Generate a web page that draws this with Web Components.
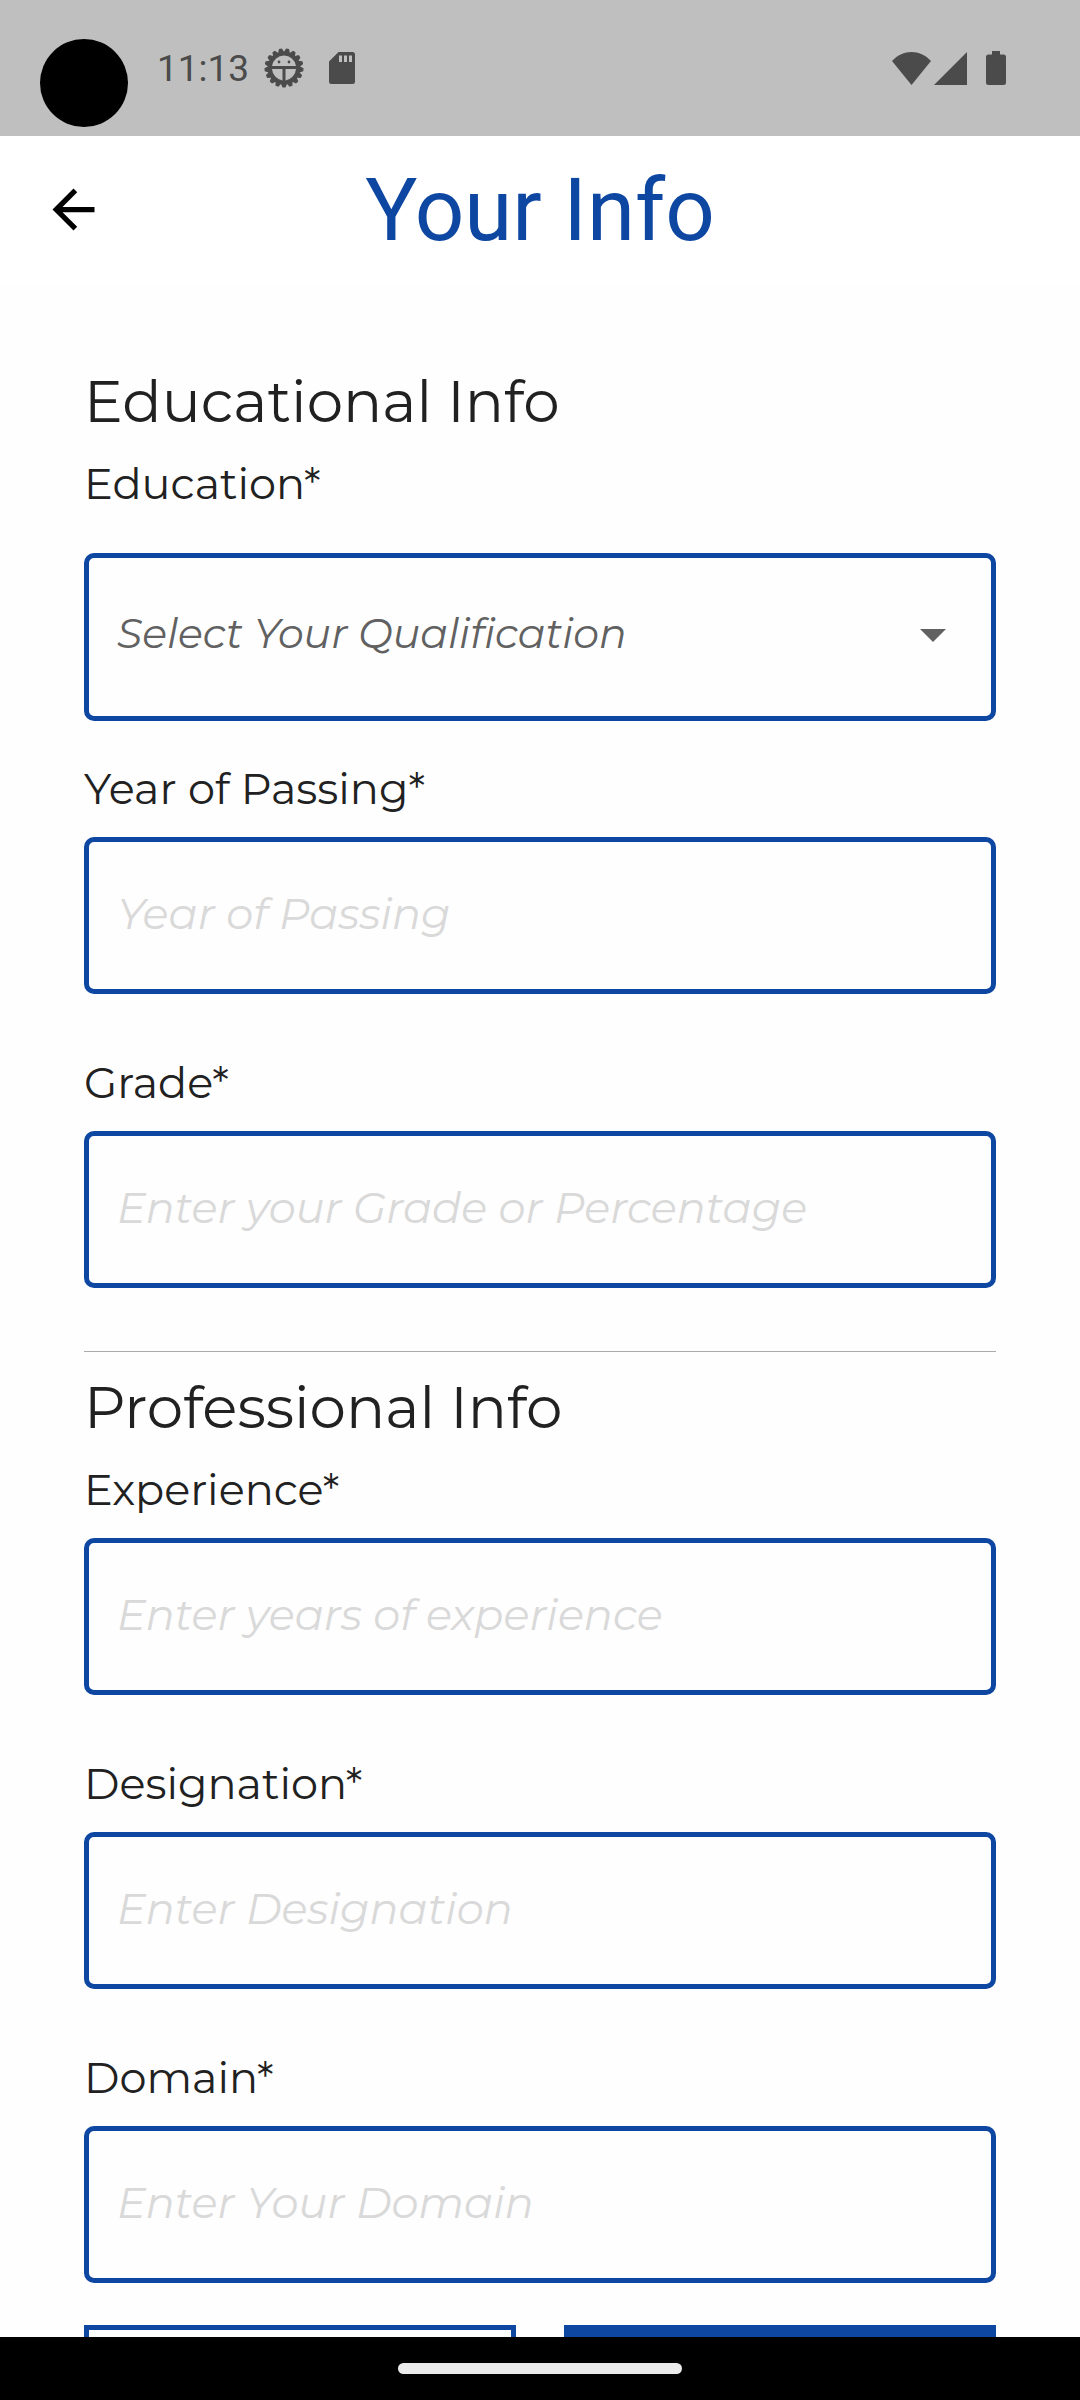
<!DOCTYPE html>
<html lang="en">
<head>
<meta charset="utf-8">
<meta name="viewport" content="width=device-width, initial-scale=1">
<title>Your Info</title>
<style>
  html, body { margin: 0; height: 100%; }
  body {
    --brand: #0d47a1;
    --ink: #212121;
    --muted: #616161;
    --hint: #d9d9d9;
    --surface: #fefefe;
    --gutter: 84px;
    font-family: Montserrat, Inter, "Open Sans", sans-serif;
    font-weight: 400;
    color: var(--ink);
    background: var(--surface);
  }
</style>
</head>
<body>
<phone-screen>
  <status-bar slot="top"></status-bar>
  <app-bar slot="top">Your Info</app-bar>
  <form-section heading="Educational Info">
    <select-field placeholder="Select Your Qualification">Education*</select-field>
    <text-field placeholder="Year of Passing">Year of Passing*</text-field>
    <text-field placeholder="Enter your Grade or Percentage">Grade*</text-field>
  </form-section>
  <form-section heading="Professional Info" divided>
    <text-field placeholder="Enter years of experience">Experience*</text-field>
    <text-field placeholder="Enter Designation">Designation*</text-field>
    <text-field placeholder="Enter Your Domain">Domain*</text-field>
  </form-section>
  <form-actions></form-actions>
  <nav-handle slot="bottom"></nav-handle>
</phone-screen>

<script>
  const define = (name, render) => customElements.define(name, class extends HTMLElement {
    constructor() {
      super();
      this.attachShadow({ mode: 'open' });
    }
    connectedCallback() {
      if (!this.shadowRoot.childNodes.length) {
        const t = document.createElement('template');
        t.innerHTML = render(this);
        this.shadowRoot.append(t.content.cloneNode(true));
      }
    }
  });

  define('phone-screen', () => `
    <style>
      :host { display: flex; flex-direction: column; height: 100vh; }
      header, footer { flex: none; }
      main {
        flex: 1; min-height: 0; overflow-y: auto; scrollbar-width: none;
        padding: 82px var(--gutter) 0; background: var(--surface);
      }
    </style>
    <header><slot name="top"></slot></header>
    <main><slot></slot></main>
    <footer><slot name="bottom"></slot></footer>`);

  /* Gear teeth for the debugging icon, one every 1/17 of a turn. */
  const teeth = Array.from({ length: 17 }, (_, i) =>
    `<path d="M16 6.5 18.500 0.500h3L24 6.5z" transform="rotate(${180 + i * 360 / 17} 20 20)"/>`).join('');

  define('status-bar', () => `
    <style>
      :host {
        display: flex; align-items: center; justify-content: space-between;
        height: 136px; padding: 0 74px 0 40px; box-sizing: border-box;
        background: #bfbfbf; color: #4b4b4b;
        font: 400 37px/44px Roboto, sans-serif;
      }
      .group { display: flex; align-items: center; }
      .camera { width: 88px; height: 88px; margin-top: 30px; border-radius: 50%; background: #000; }
      time { margin-left: 29px; margin-right: 15px; padding-top: 2px; }
      svg { display: block; fill: currentColor; }
      .sd { margin-left: 25px; }
      .signal { margin-left: 3px; }
      .battery { margin-left: 19px; }
    </style>
    <div class="group">
      <div class="camera"></div>
      <time>11:13</time>
      <svg width="40" height="40" viewBox="0 0 40 40" aria-hidden="true">
        ${teeth}
        <path fill-rule="evenodd" d="M20 4.500a15.500 15.500 0 1 0 0 31a15.500 15.500 0 1 0 0-31zM20 7.500a12.500 12.500 0 0 1 12 10.500H8A12.500 12.500 0 0 1 20 7.500zM8 21h10.500v11.500A12.500 12.500 0 0 1 8 21zM21.500 21H32a12.500 12.500 0 0 1-10.500 11.500z"/>
        <circle cx="15" cy="14" r="1.400"/><circle cx="25" cy="14" r="1.400"/>
      </svg>
      <svg class="sd" width="26" height="32" viewBox="0 0 26 32" aria-hidden="true">
        <path fill-rule="evenodd" d="M9.500 0H23.500A2.500 2.500 0 0 1 26 2.500V29.500A2.500 2.500 0 0 1 23.500 32H2.500A2.500 2.500 0 0 1 0 29.500V9.500zM10 3.500V10h3V3.500zM15 3.500V10h3V3.500zM20 3.500V10h3V3.500z"/>
      </svg>
    </div>
    <div class="group">
      <svg width="39" height="33" viewBox="0 0 39 33" aria-hidden="true"><path d="M19.500 33 0 9C11-3 28-3 39 9z"/></svg>
      <svg class="signal" width="33" height="33" viewBox="0 0 33 33" aria-hidden="true"><path d="M33 0V33H0z"/></svg>
      <svg class="battery" width="20" height="34" viewBox="0 0 20 34" aria-hidden="true"><path d="M6 0h8v3.500h3.500A2.500 2.500 0 0 1 20 6V31.500A2.500 2.500 0 0 1 17.500 34H2.500A2.500 2.500 0 0 1 0 31.500V6A2.500 2.500 0 0 1 2.500 3.500H6z"/></svg>
    </div>`);

  define('app-bar', () => `
    <style>
      :host {
        display: grid; grid-template-columns: 147px 1fr 147px; align-items: center;
        height: 147px; background: #fff;
      }
      button {
        display: grid; place-items: center; width: 147px; height: 147px;
        padding: 0; border: 0; background: none; color: #000; cursor: pointer;
      }
      svg { fill: currentColor; }
      h1 { margin: 0; text-align: center; color: var(--brand); font: 400 87px/100px Roboto, sans-serif; }
    </style>
    <button type="button" aria-label="Go back">
      <svg width="63" height="63" viewBox="0 0 24 24" aria-hidden="true"><path d="M20 11H7.830l5.590-5.590L12 4l-8 8 8 8 1.410-1.410L7.830 13H20v-2z"/></svg>
    </button>
    <h1><slot></slot></h1>`);

  define('form-section', el => `
    <style>
      :host { display: block; }
      :host([divided]) { margin-top: 4px; padding-top: 19px; border-top: 1px solid #ababab; }
      h2 { margin: 0 0 15px; font-size: 58px; line-height: 74px; font-weight: 400; }
    </style>
    <h2>${el.getAttribute('heading')}</h2>
    <slot></slot>`);

  const fieldStyle = `
      :host { display: flex; flex-direction: column; }
      label { font-size: 43px; line-height: 52px; }
      input, select {
        width: 100%; box-sizing: border-box; margin: 0;
        border: 5px solid var(--brand); border-radius: 10px; background: transparent;
        font: italic 400 43px/52px Montserrat, Inter, "Open Sans", sans-serif;
      }`;

  define('text-field', el => `
    <style>
      ${fieldStyle}
      :host { gap: 22px; padding: 4px 0 59px; }
      input { height: 157px; padding: 0 28px 4px; color: var(--ink); }
      input::placeholder { color: var(--hint); opacity: 1; }
    </style>
    <label for="control"><slot></slot></label>
    <input id="control" type="text" placeholder="${el.getAttribute('placeholder')}">`);

  define('select-field', el => `
    <style>
      ${fieldStyle}
      :host { gap: 43px; padding: 4px 0 38px; }
      .box { display: grid; align-items: center; }
      .box > * { grid-area: 1 / 1; }
      select { appearance: none; height: 168px; padding: 0 90px 8px 28px; color: var(--muted); font-size: 41px; }
      svg { justify-self: end; margin: 0 50px 3px 0; fill: var(--muted); pointer-events: none; }
    </style>
    <label for="control"><slot></slot></label>
    <div class="box">
      <select id="control"><option>${el.getAttribute('placeholder')}</option></select>
      <svg width="26" height="13" viewBox="0 0 26 13" aria-hidden="true"><path d="M0 0H26L13 13z"/></svg>
    </div>`);

  define('form-actions', () => `
    <style>
      :host { display: grid; grid-template-columns: 1fr 1fr; gap: 48px; margin-top: -17px; padding-bottom: 48px; }
      button { height: 126px; border: 5px solid var(--brand); background: var(--surface); cursor: pointer; }
      .primary { background: var(--brand); }
    </style>
    <button type="button" aria-label="Back"></button>
    <button type="button" class="primary" aria-label="Next"></button>`);

  define('nav-handle', () => `
    <style>
      :host { display: grid; place-items: center; height: 63px; background: #000; }
      div { width: 284px; height: 11px; border-radius: 6px; background: #ebebeb; }
    </style>
    <div></div>`);
</script>
</body>
</html>
